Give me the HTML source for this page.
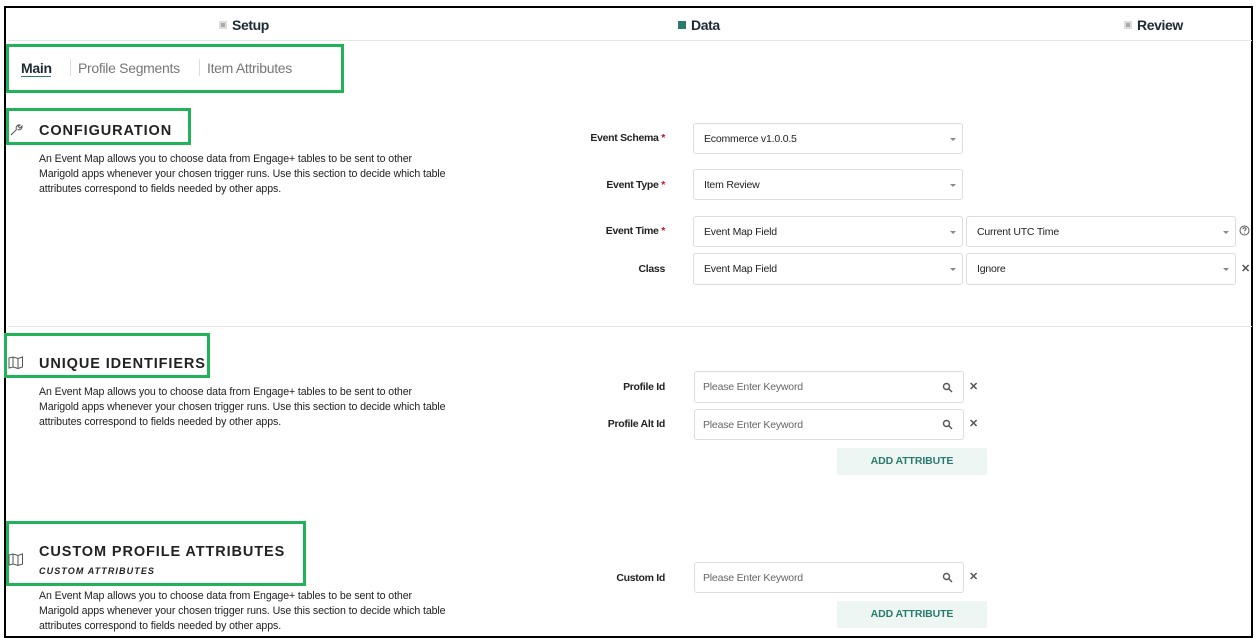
<!DOCTYPE html>
<html><head><meta charset="utf-8"><style>
*{margin:0;padding:0;box-sizing:border-box}
body{width:1256px;height:639px;background:#fff;position:relative;overflow:hidden;font-family:"Liberation Sans",sans-serif;color:#222}
.a{position:absolute;white-space:nowrap}
.frame{position:absolute;left:4px;top:6px;width:1249px;height:632px;border:2px solid #000}
.hdr{font-weight:bold;font-size:14px;letter-spacing:-0.4px;color:#1b2a33;line-height:16px}
.sq{display:inline-block;width:8px;height:8px;margin-right:5px;vertical-align:1px}
.g{position:absolute;border:3px solid #22b35a}
.tab{font-size:14px;color:#777;letter-spacing:-0.3px;line-height:16px}
.tt{font-size:14.5px;font-weight:bold;letter-spacing:0.9px;color:#222;line-height:16px}
.desc{font-size:10.6px;line-height:15px;color:#222;letter-spacing:-0.1px}
.lbl{font-size:10.5px;font-weight:bold;color:#222;text-align:right;width:120px;letter-spacing:-0.3px;line-height:12px}
.req{color:#c8102e}
.inp{position:absolute;border:1px solid #ddd;border-radius:3px;background:#fff;font-size:10.5px;color:#222;padding-left:10px;letter-spacing:-0.2px}
.inp .car{position:absolute;right:6px;top:14px;width:0;height:0;border-left:3px solid transparent;border-right:3px solid transparent;border-top:3px solid #888}
.ph{color:#666}
.btn{position:absolute;background:#edf6f3;color:#2a7a6d;font-weight:bold;font-size:10.5px;text-align:center;border-radius:2px;letter-spacing:-0.1px}
.x{font-size:11px;font-weight:bold;color:#555}
</style></head><body>
<div class="frame"></div>
<div class="a" style="left:8px;top:40px;width:1244px;height:1px;background:#e6e6e6"></div>
<div class="a hdr" style="left:219px;top:17px"><span class="sq" style="background:#aaa;border:2px solid #ddd"></span>Setup</div>
<div class="a hdr" style="left:678px;top:17px"><span class="sq" style="background:#2a7a6d"></span>Data</div>
<div class="a hdr" style="left:1124px;top:17px"><span class="sq" style="background:#aaa;border:2px solid #ddd"></span>Review</div>

<div class="g" style="left:6px;top:44px;width:338px;height:49px"></div>
<div class="a tab" style="left:21px;top:60px;color:#1b2a33;font-weight:bold">Main</div>
<div class="a" style="left:21px;top:76px;width:30px;height:1px;background:#2a7a6d"></div>
<div class="a" style="left:70px;top:59px;width:1px;height:17px;background:#ddd"></div>
<div class="a tab" style="left:78px;top:60px">Profile Segments</div>
<div class="a" style="left:199px;top:59px;width:1px;height:17px;background:#ddd"></div>
<div class="a tab" style="left:207px;top:60px">Item Attributes</div>

<div class="g" style="left:6px;top:108px;width:185px;height:37px"></div>
<svg class="a" style="left:10px;top:123px" width="13" height="13" viewBox="0 0 13 13" fill="none" stroke="#555" stroke-width="1"><path d="M1.5 11.5l5-5M6.5 6.5c-1-2 .5-5 3.5-4.5L8.5 3.5l1 1.5 1.5-.5 1-1.5c.5 3-2.5 4.5-4.5 3.5M1 11l1 1"/></svg>
<div class="a tt" style="left:39px;top:123px">CONFIGURATION</div>
<div class="a desc" style="left:39px;top:152px">An Event Map allows you to choose data from Engage+ tables to be sent to other<br>Marigold apps whenever your chosen trigger runs. Use this section to decide which table<br>attributes correspond to fields needed by other apps.</div>

<div class="a lbl" style="left:545px;top:132px">Event Schema <span class="req">*</span></div>
<div class="inp" style="left:693px;top:123px;width:270px;height:31px;line-height:30px">Ecommerce v1.0.0.5<span class="car"></span></div>
<div class="a lbl" style="left:545px;top:179px">Event Type <span class="req">*</span></div>
<div class="inp" style="left:693px;top:169px;width:270px;height:31px;line-height:30px">Item Review<span class="car"></span></div>
<div class="a lbl" style="left:545px;top:225px">Event Time <span class="req">*</span></div>
<div class="inp" style="left:693px;top:216px;width:270px;height:31px;line-height:30px">Event Map Field<span class="car"></span></div>
<div class="inp" style="left:966px;top:216px;width:270px;height:31px;line-height:30px">Current UTC Time<span class="car"></span></div>
<svg class="a" style="left:1239px;top:225px" width="11" height="11" viewBox="0 0 11 11" fill="none" stroke="#555" stroke-width="1"><circle cx="5.5" cy="5.5" r="4.5"/><path d="M4 4.3c0-1 .7-1.5 1.5-1.5s1.5.5 1.5 1.3c0 1-1.5 1.1-1.5 2.2M5.5 7.6v.8"/></svg>
<div class="a lbl" style="left:545px;top:263px">Class</div>
<div class="inp" style="left:693px;top:253px;width:270px;height:32px;line-height:31px">Event Map Field<span class="car"></span></div>
<div class="inp" style="left:966px;top:253px;width:270px;height:32px;line-height:31px">Ignore<span class="car"></span></div>
<div class="a x" style="left:1241px;top:262px">✕</div>

<div class="a" style="left:8px;top:326px;width:1244px;height:1px;background:#e6e6e6"></div>

<div class="g" style="left:4px;top:333px;width:206px;height:45px"></div>
<svg class="a" style="left:8px;top:356px" width="16" height="13" viewBox="0 0 16 13" fill="none" stroke="#555" stroke-width="1"><path d="M1 2l4-1 5 1.5 4.5-1.5v10L10 12.5 5 11l-4 1zM5 1v10M10 2.5v10"/></svg>
<div class="a tt" style="left:39px;top:356px">UNIQUE IDENTIFIERS</div>
<div class="a desc" style="left:39px;top:385px">An Event Map allows you to choose data from Engage+ tables to be sent to other<br>Marigold apps whenever your chosen trigger runs. Use this section to decide which table<br>attributes correspond to fields needed by other apps.</div>

<div class="a lbl" style="left:545px;top:381px">Profile Id</div>
<div class="inp ph" style="left:694px;top:371px;width:270px;height:32px;line-height:31px;padding-left:8px">Please Enter Keyword</div>
<svg class="a" style="left:942px;top:382px" width="11" height="11" viewBox="0 0 11 11" fill="none" stroke="#555" stroke-width="1.4"><circle cx="4.5" cy="4.5" r="3"/><path d="M7 7l3 3"/></svg>
<div class="a x" style="left:969px;top:380px">✕</div>
<div class="a lbl" style="left:545px;top:418px">Profile Alt Id</div>
<div class="inp ph" style="left:694px;top:409px;width:270px;height:31px;line-height:30px;padding-left:8px">Please Enter Keyword</div>
<svg class="a" style="left:942px;top:419px" width="11" height="11" viewBox="0 0 11 11" fill="none" stroke="#555" stroke-width="1.4"><circle cx="4.5" cy="4.5" r="3"/><path d="M7 7l3 3"/></svg>
<div class="a x" style="left:969px;top:417px">✕</div>
<div class="btn" style="left:837px;top:448px;width:150px;height:27px;line-height:27px">ADD ATTRIBUTE</div>

<div class="g" style="left:6px;top:521px;width:300px;height:65px"></div>
<svg class="a" style="left:8px;top:553px" width="16" height="13" viewBox="0 0 16 13" fill="none" stroke="#555" stroke-width="1"><path d="M1 2l4-1 5 1.5 4.5-1.5v10L10 12.5 5 11l-4 1zM5 1v10M10 2.5v10"/></svg>
<div class="a tt" style="left:39px;top:544px">CUSTOM PROFILE ATTRIBUTES</div>
<div class="a" style="left:39px;top:566px;font-size:9px;font-weight:bold;font-style:italic;letter-spacing:1.1px;color:#222">CUSTOM ATTRIBUTES</div>
<div class="a desc" style="left:39px;top:589px">An Event Map allows you to choose data from Engage+ tables to be sent to other<br>Marigold apps whenever your chosen trigger runs. Use this section to decide which table<br>attributes correspond to fields needed by other apps.</div>

<div class="a lbl" style="left:545px;top:572px">Custom Id</div>
<div class="inp ph" style="left:694px;top:562px;width:270px;height:31px;line-height:30px;padding-left:8px">Please Enter Keyword</div>
<svg class="a" style="left:942px;top:572px" width="11" height="11" viewBox="0 0 11 11" fill="none" stroke="#555" stroke-width="1.4"><circle cx="4.5" cy="4.5" r="3"/><path d="M7 7l3 3"/></svg>
<div class="a x" style="left:969px;top:570px">✕</div>
<div class="btn" style="left:837px;top:601px;width:150px;height:27px;line-height:27px">ADD ATTRIBUTE</div>
</body></html>
